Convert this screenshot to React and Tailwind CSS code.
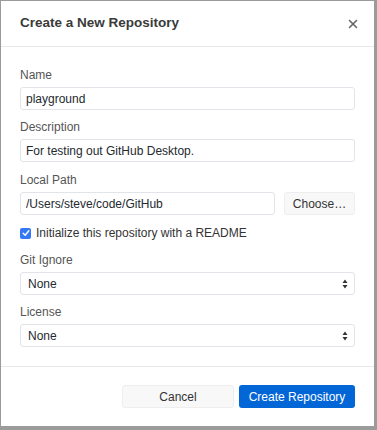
import { X } from 'lucide-react';

function Label({ children }) {
  return <div className="text-[12px] leading-[14px] text-[#555] mb-[5px]">{children}</div>;
}

function Input({ value, className = '' }) {
  return (
    <div className={`h-[23px] border border-[#e1e4e8] rounded-[3px] bg-white flex items-center px-[5px] text-[12px] text-[#24292e] ${className}`}>
      {value}
    </div>
  );
}

function Select({ value }) {
  return (
    <div className="h-[23px] border border-[#e1e4e8] rounded-[3px] bg-white flex items-center justify-between pl-[7px] pr-[6px] text-[12px] text-[#24292e]">
      <span>{value}</span>
      <svg width="6" height="10" viewBox="0 0 6 10">
        <path d="M3 0.5L5.5 4H0.5Z M3 9.5L0.5 6H5.5Z" fill="#333" />
      </svg>
    </div>
  );
}

export default function App() {
  return (
    <div className="w-[377px] h-[430px] bg-[#9b9b9b] pl-[1px] pt-[1px] pr-[3px] pb-[4px]" style={{ fontFamily: '"Liberation Sans", Arial, sans-serif' }}>
      <div className="w-full h-full bg-white flex flex-col">
        <div className="h-[46px] flex items-center justify-between pl-[19px] pr-[14px] border-b border-[#e8e8e8]">
          <span className="text-[13.5px] font-bold text-[#3a3a3a]">Create a New Repository</span>
          <X size={14} strokeWidth={2.6} className="text-[#666]" />
        </div>

        <div className="flex-1 flex flex-col px-[19px] pt-[21px]">
          <Label>Name</Label>
          <Input value="playground" />

          <div className="mt-[10px]"><Label>Description</Label></div>
          <Input value="For testing out GitHub Desktop." />

          <div className="mt-[11px]"><Label>Local Path</Label></div>
          <div className="flex gap-[9px]">
            <Input value="/Users/steve/code/GitHub" className="flex-1" />
            <div className="w-[71px] h-[23px] rounded-[3px] bg-[#f8f8f9] border border-[#eeeeee] flex items-center justify-center text-[12px] text-[#333]">Choose…</div>
          </div>

          <div className="flex items-center h-[14px] gap-[5px] mt-[11px] text-[12px] text-[#333]">
            <div className="w-[11px] h-[11px] rounded-[2px] bg-[#3478f6] flex items-center justify-center">
              <svg width="8" height="8" viewBox="0 0 8 8">
                <path d="M1.2 4.2L3.2 6.2L6.8 1.8" stroke="white" strokeWidth="1.5" fill="none" strokeLinecap="round" strokeLinejoin="round" />
              </svg>
            </div>
            <span>Initialize this repository with a README</span>
          </div>

          <div className="mt-[13px]"><Label>Git Ignore</Label></div>
          <Select value="None" />

          <div className="mt-[10px]"><Label>License</Label></div>
          <Select value="None" />
        </div>

        <div className="border-t border-[#e8e8e8] h-[60px] flex items-center justify-end gap-[5px] pr-[19px]">
          <div className="w-[112px] h-[23px] rounded-[3px] bg-[#f8f8f9] border border-[#eeeeee] flex items-center justify-center text-[12px] text-[#333]">Cancel</div>
          <div className="w-[116px] h-[23px] rounded-[3px] bg-[#0366d6] flex items-center justify-center text-[12px] text-white">Create Repository</div>
        </div>
      </div>
    </div>
  );
}
